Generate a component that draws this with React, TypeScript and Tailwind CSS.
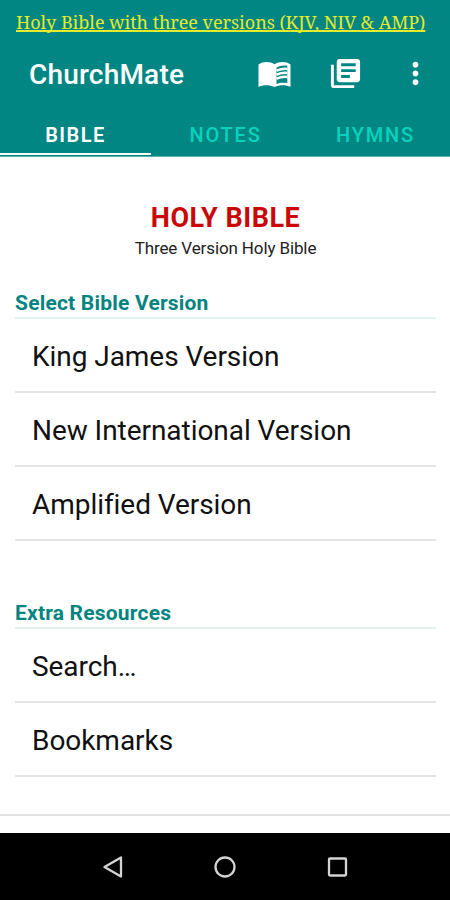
import { MdLibraryBooks, MdMoreVert } from "react-icons/md";

const tabs = ["BIBLE", "NOTES", "HYMNS"];
const versions = [
  "King James Version",
  "New International Version",
  "Amplified Version",
];
const resources = ["Search…", "Bookmarks"];

type SectionProps = {
  title: string;
  items: string[];
};

const BookIcon = () => {
  return (
    <svg viewBox="0 0 33 27" className="h-[27px] w-[33px] shrink-0">
      <path
        d="M.5 3.500C4.500.300 12 .200 16.500 3.200C21 .200 28.500.300 32.500 3.500V25.800C28 23.700 21.500 23.700 16.500 26C11.500 23.700 5 23.700.5 25.800z"
        fill="white"
      />
      <path
        d="M18.500 6.800C21.500 4.700 26 4 29.300 4.800V22C25.500 21.300 21.500 21.700 18.500 23z"
        fill="#028683"
      />
      <path
        d="M18.500 9.600C22.500 8 26 7.500 29.500 8M18.500 13.600C22.500 12 26 11.500 29.500 12M18.500 17.600C22.500 16 26 15.500 29.500 16"
        fill="none"
        stroke="white"
        strokeWidth="2.400"
      />
    </svg>
  );
};

const Section = ({ title, items }: SectionProps) => {
  return (
    <section>
      <h2 className="h-[29px] border-b-2 border-[#e3f1ef] text-[21px] leading-[27px] font-bold tracking-[0.2px] text-[#048480] whitespace-nowrap">
        {title}
      </h2>
      <ul>
        {items.map((item) => (
          <li
            key={item}
            className="flex h-[74px] items-center border-b-2 border-[#e4e4e4] pt-[3px] pl-[17px] text-[28px] tracking-[-0.05px] text-[#111111] whitespace-nowrap"
          >
            {item}
          </li>
        ))}
      </ul>
    </section>
  );
};

const Header = () => {
  return (
    <header className="flex h-[157px] flex-col border-b border-[#5cb0ae] bg-[#028683] text-white">
      <p className="h-[44px] pt-[8px] pl-[16px] font-['Noto_Serif','DejaVu_Serif_Condensed','DejaVu_Serif',serif] text-[18px] leading-[28px] tracking-[-0.04px] text-[#e4ea2c] underline decoration-[1.5px] underline-offset-[1px] [text-decoration-skip-ink:none] whitespace-nowrap">
        Holy Bible with three versions (KJV, NIV &amp; AMP)
      </p>
      <div className="flex h-[61px] items-center pl-[29px]">
        <h1 className="w-[229px] text-[28px] font-medium tracking-[0.2px]">
          ChurchMate
        </h1>
        <BookIcon />
        <MdLibraryBooks className="mb-[2px] ml-[37px] size-[35px] shrink-0" />
        <MdMoreVert className="mb-[2px] ml-[35px] size-[35px] shrink-0" />
      </div>
      <nav className="grid h-[50px] grid-cols-3">
        {tabs.map((tab, i) => (
          <button
            key={tab}
            className={
              i === 0
                ? "-mr-px rounded-br-[2px] border-b-[3px] border-white pt-[13px] text-[20px] leading-[35px] font-semibold tracking-[1.5px]"
                : "pt-[13px] pb-[3px] pl-px text-[20px] leading-[35px] font-medium tracking-[1.8px] text-[#05d3bd]"
            }
          >
            {tab}
          </button>
        ))}
      </nav>
      <div className="h-px shrink-0 bg-[#028683]" />
    </header>
  );
};

const NavigationBar = () => {
  return (
    <footer className="h-[67px] bg-black">
      <svg
        viewBox="0 0 450 67"
        className="h-full w-full fill-none stroke-[#d4d4d4] stroke-[2.3]"
        strokeLinejoin="round"
      >
        <path d="M121 24.500v19L104.500 34z" />
        <circle cx="225" cy="34" r="9.500" />
        <rect x="329" y="25.500" width="17" height="17" rx="1" />
      </svg>
    </footer>
  );
};

export default function App() {
  return (
    <div className="flex h-[900px] w-[450px] flex-col overflow-hidden bg-white font-[Roboto,sans-serif]">
      <Header />
      <main className="flex h-[657px] flex-col pr-[14px] pl-[15px]">
        <div className="pt-[44px] text-center">
          <p className="text-[27px] leading-[35px] font-bold tracking-[0.5px] text-[#c90808]">
            HOLY BIBLE
          </p>
          <p className="text-[17px] leading-[25px] tracking-[-0.12px] text-[#222222]">
            Three Version Holy Bible
          </p>
        </div>
        <div className="mt-[29px]">
          <Section title="Select Bible Version" items={versions} />
        </div>
        <div className="mt-[59px]">
          <Section title="Extra Resources" items={resources} />
        </div>
      </main>
      <div className="h-[19px] border-t-2 border-[#e4e4e4]" />
      <NavigationBar />
    </div>
  );
}
